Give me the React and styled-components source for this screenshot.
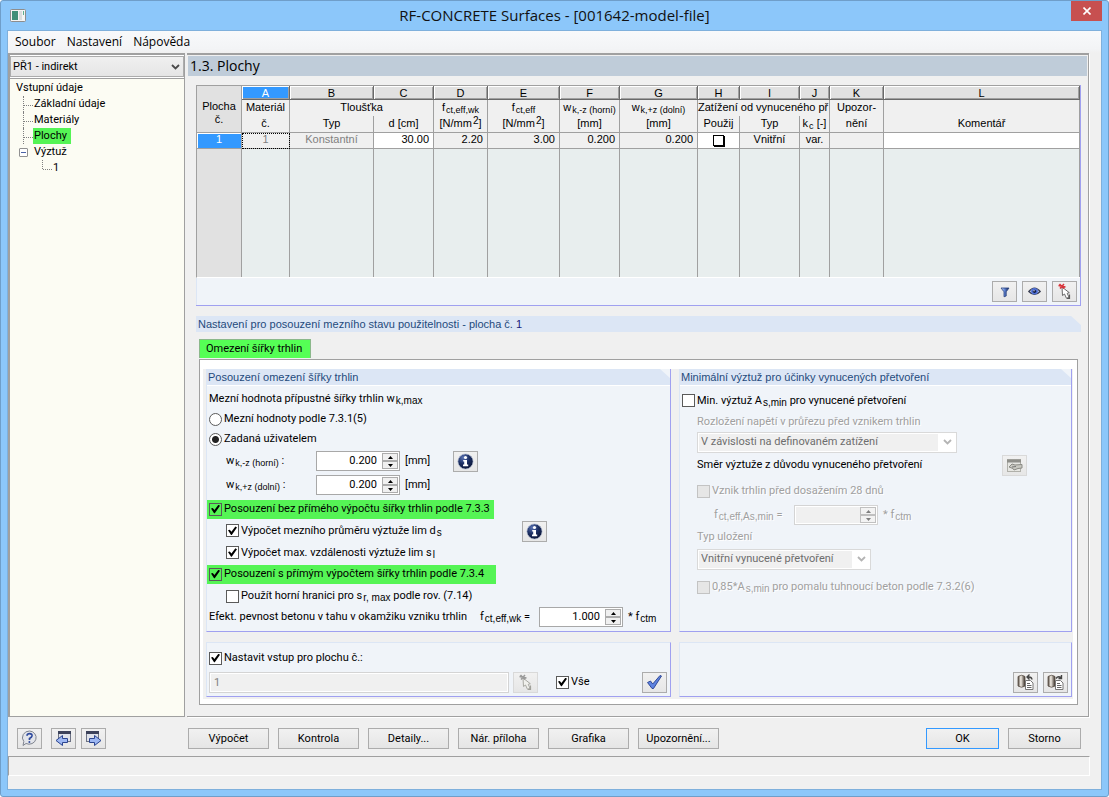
import React from "react";
import styled, { createGlobalStyle, css } from "styled-components";

const ui = `Roboto, "Noto Sans", sans-serif`;
const segoe = `"Open Sans", "Noto Sans", sans-serif`;
const gridFont = `"Liberation Sans", Arial, sans-serif`;

const GlobalStyle = createGlobalStyle`
  * { box-sizing: border-box; }
  body { margin: 0; font: 11px/16px ${ui}; color: #000; }
  button, input, select { font: inherit; color: inherit; margin: 0; }
  sub, sup { line-height: 0; }
  sub { font: 10px/0 ${gridFont}; vertical-align: -2px; margin-left: 1px; }
  sup { font-size: 10px; vertical-align: 3px; margin-left: 1px; }
`;

const Window = styled.div`
  min-height: 100vh;
  display: flex;
  flex-direction: column;
  background: #8cc7fa;
  border: 1px solid #6f9ec9;
  border-radius: 3px;
  padding: 0 6px 6px;
`;

const TitleBar = styled.header`
  display: grid;
  grid-template-columns: 34px 1fr 34px;
  height: 29px;
`;

const AppIcon = styled.svg`
  margin: 8px 0 0 3px;
`;

const WindowTitle = styled.h1`
  margin: 0;
  font: 15px/29px ${segoe};
  text-align: center;
  white-space: nowrap;
  color: #111;
`;

const CloseButton = styled.button`
  width: 31px;
  height: 20px;
  justify-self: end;
  display: flex;
  align-items: center;
  justify-content: center;
  border: 0;
  padding: 0;
  background: #c75050;
`;

const Client = styled.div`
  flex: 1;
  display: flex;
  flex-direction: column;
  background: #f0f0f0;
  border: 1px solid #7fb0dc;
`;

const MenuBar = styled.nav`
  height: 22px;
  display: flex;
  gap: 11px;
  padding: 0 7px;
  background: linear-gradient(#f8f9fb, #f3f4f6 80%, #f0f0f0);
`;

const MenuItem = styled.button`
  border: 0;
  padding: 0;
  background: none;
  font: 12px/20px ${segoe};
`;

const Workspace = styled.div`
  flex: 1;
  display: grid;
  grid-template-columns: 177px minmax(0, 1fr);
  gap: 2px;
  padding-right: 12px;
`;

const Sidebar = styled.aside`
  display: flex;
  flex-direction: column;
  background: #fff;
  border: solid #a0a0a0;
  border-width: 2px 1px 1px 2px;
  padding-top: 1px;
`;

const SelectBox = styled.div`
  display: grid;
  width: ${(p) => p.$width || "auto"};
  height: 21px;
  border: 1px solid ${(p) => (p.$muted ? "#d9d9d9" : "#acacac")};
  background: ${(p) => (p.$muted ? "#fff" : "linear-gradient(#f0f0f0, #e5e5e5)")};
  > * { grid-area: 1 / 1; }
  svg { place-self: center end; margin-right: ${(p) => (p.$muted ? 4 : 3)}px; pointer-events: none; }
  select {
    appearance: none;
    border: 0;
    border-radius: 0;
    outline: none;
    min-width: 0;
    opacity: 1;
    padding: 0 2px;
    background: transparent;
  }
  select:disabled {
    margin: 1px 18px 1px 1px;
    padding: 0 2px;
    background: #f0f0f0;
    color: #6d6d6d;
  }
`;

const Tree = styled.ul`
  flex: 1;
  margin: 1px 0 0;
  border-top: 1px solid #a0a0a0;
  padding: 1px 0 0 5px;
  list-style: none;
  background: #fcfcf3;
`;

const TreeItem = styled.li`
  display: flex;
  height: 16px;
  line-height: 16px;
  padding-left: ${(p) => p.$level * 19}px;
`;

const Branch = styled.span`
  width: 10px;
  margin-left: 8px;
  height: ${(p) => (p.$last ? 9 : 16)}px;
  border-left: 1px dotted #808080;
  display: flex;
  &::after {
    content: "";
    width: 9px;
    height: 9px;
    border-bottom: 1px dotted #808080;
  }
`;

const Expander = styled.button`
  width: 9px;
  height: 9px;
  margin: 4px 5px 0 4px;
  border: 1px solid #919191;
  border-radius: 1px;
  padding: 3px 1px;
  background: #fff;
  display: flex;
  &::after { content: ""; flex: 1; height: 1px; background: #4b63a7; }
`;

const TreeLabel = styled.a`
  color: inherit;
  text-decoration: none;
  padding: 0 4px 0 1px;
  white-space: nowrap;
  background: ${(p) => (p.$active ? "#55f455" : "none")};
`;

const Main = styled.main`
  border: solid #a0a0a0;
  border-width: 2px 1px 1px 0;
  box-shadow: 1px 1px 0 #fff;
  padding: 1px 1px 11px 1px;
  background: #f0f0f0;
`;

const PageTitle = styled.h2`
  margin: 0;
  height: 20px;
  padding-left: 2px;
  background: #bfccd9;
  font: 14px/20px ${segoe};
`;

const Page = styled.div`
  padding: 9px 6px 0 8px;
`;

const GridPanel = styled.section`
  background: #f0f4f9;
  border: solid #a0a0f0;
  border-width: 0 1px 1px 0;
`;

const DataTable = styled.table`
  width: 100%;
  table-layout: fixed;
  border-collapse: separate;
  border-spacing: 0;
  border-top: 1px solid #a0a0a0;
  border-left: 1px solid #a0a0a0;
  border-bottom: 1px solid #fff;
  font: 11px/13px ${gridFont};
  th, td {
    padding: 0 0 2px;
    font-weight: normal;
    overflow: hidden;
    white-space: nowrap;
    text-align: center;
    border: 0 solid #a0a0a0;
    border-right-width: 1px;
  }
  sub { font-size: 9px; }
`;

const ColumnLetter = styled.th`
  height: 14px;
  line-height: 12px;
  background: ${(p) => (p.$selected ? "#3399ff" : "#e1e1e1")};
  color: ${(p) => (p.$selected ? "#fff" : "#000")};
  box-shadow: inset 1px 1px 0 #fff, inset -1px -1px 0 #a0a0a0;
  && { border-right-color: #696969; border-bottom: 1px solid #696969; padding: 0; }
`;

const HeadCell = styled.th`
  height: ${(p) => (p.$bottom ? 17 : 16)}px;
  background: #f0f0f0;
  && {
    border-bottom-width: ${(p) => (p.$bottom ? 1 : 0)}px;
    text-align: ${(p) => (p.$clip ? "left" : "center")};
  }
`;

const RowHead = styled.th`
  background: #e1e1e1;
  && { border-bottom-width: 1px; padding-top: 10px; }
`;

const RowNumber = styled.th`
  height: 16px;
  background: #3399ff;
  color: #fff;
  box-shadow: inset 1px 1px 0 #fff;
  && { border-bottom-width: 1px; }
`;

const Cell = styled.td`
  height: 16px;
  background: ${(p) => (p.$editable ? "#fff" : "#f0f0f0")};
  color: ${(p) => (p.$muted ? "#808080" : "#000")};
  ${(p) => p.$focused && css`outline: 1px dotted #000; outline-offset: -1px;`}
  && {
    border-bottom-width: 1px;
    text-align: ${(p) => (p.$number ? "right" : "center")};
    padding-right: ${(p) => (p.$number ? 4 : 0)}px;
  }
`;

const CellCheck = styled.input`
  appearance: none;
  display: block;
  width: 11px;
  height: 11px;
  && { margin: 2px auto 0; }
  border: 1px solid #000;
  background: #fff;
  box-shadow: 1px 1px 0 #000;
`;

const Filler = styled.td`
  height: 128px;
  background: ${(p) => (p.$head ? "#e1e1e1" : "#e8eeee")};
`;

const GridTools = styled.div`
  display: flex;
  justify-content: flex-end;
  gap: 5px;
  padding: 3px 3px 3px 0;
  border-left: 1px solid #dce6f5;
`;

const IconButton = styled.button`
  width: 25px;
  height: 21px;
  flex: none;
  display: inline-flex;
  align-items: center;
  justify-content: center;
  padding: 0;
  border: 1px solid ${(p) => (p.disabled ? "#d9d9d9" : "#acacac")};
  background: linear-gradient(#f1f1f1, #e6e6e6);
  svg { display: block; }
`;

const caption = css`
  margin: 0;
  height: 16px;
  background: #dce6f5;
  color: #1f4a7c;
  font: 11px/16px ${gridFont};
  clip-path: polygon(0 0, calc(100% - 10px) 0, 100% 9px, 100% 100%, 0 100%);
`;

const SectionTitle = styled.h3`
  ${caption}
  margin-top: 10px;
  padding-left: 2px;
  span { color: #1a1a7a; }
`;

const Tab = styled.button`
  display: block;
  height: 19px;
  margin: 7px 0 0 3px;
  border: 1px solid #8bb88b;
  border-bottom: 0;
  padding: 0 8px 0 6px;
  background: #55ff55;
`;

const TabPanel = styled.section`
  margin: 1px 3px 0 3px;
  border: 1px solid #a0a0a0;
  background: #fff;
  padding: 9px 4px 5px 3px;
`;

const Panels = styled.div`
  display: grid;
  grid-template-columns: 465px minmax(0, 1fr);
  column-gap: 8px;
  row-gap: 10px;
  padding: 0 1px 2px 3px;
  background: #f0f0f0;
`;

const Group = styled.section`
  display: flex;
  flex-direction: column;
  border: 1px solid #a0a0f0;
  border-top: ${(p) => (p.$titled ? "0" : "1px solid #dce6f5")};
  border-left-color: #dce6f5;
  background: #f0f4f9;
`;

const GroupTitle = styled.h4`
  ${caption}
  flex: none;
  padding-left: 1px;
`;

const Form = styled.div`
  display: grid;
  grid-template-rows: ${(p) => p.$rows};
  align-items: center;
  border-top: 1px solid #fff;
  padding: 3px 0 4px 2px;
`;

const Line = styled.div`
  display: flex;
  align-items: center;
  white-space: nowrap;
  padding-left: ${(p) => p.$indent || 0}px;
  color: ${(p) => (p.$muted ? "#a0a0a0" : "inherit")};
  ${(p) => p.$muted && "text-shadow: 1px 1px 0 #fff;"}
`;

const Marked = styled(Line)`
  width: ${(p) => p.$width}px;
  height: 19px;
  margin-left: -2px;
  padding-left: 2px;
  background: #55f455;
`;

const Choice = styled.label`
  display: inline-flex;
  align-items: center;
  gap: 2px;
  white-space: nowrap;
`;

const Radio = styled.input`
  appearance: none;
  width: 13px;
  height: 13px;
  border: 1px solid #5a5a5a;
  border-radius: 50%;
  background: #fff;
  &:checked { background: radial-gradient(circle, #222 0 3px, #fff 4px); }
`;

const Check = styled.input`
  appearance: none;
  width: 13px;
  height: 13px;
  border: 1px solid ${(p) => (p.disabled ? "#c3c3c3" : "#5a5a5a")};
  background: ${(p) => (p.disabled ? "#e6e6e6" : p.$tint || "#fff")};
  display: inline-grid;
  &:checked::after {
    content: "";
    width: 9px;
    height: 9px;
    margin: 1px;
    background: #000;
    clip-path: polygon(0 45%, 20% 38%, 38% 62%, 82% 4%, 100% 14%, 42% 98%, 34% 98%);
  }
`;

const FieldLabel = styled.label`
  width: ${(p) => p.$width}px;
  flex: none;
`;

const SmallSub = styled.sub`
  && { font-size: 9px; }
`;

const Unit = styled.span`
  padding-left: 5px;
  width: ${(p) => p.$width || "auto"};
`;

const SpinBox = styled.span`
  width: 84px;
  height: 20px;
  flex: none;
  display: flex;
  border: 1px solid ${(p) => (p.$muted ? "#d4d4d4" : "#a8a8a8")};
  background: #fff;
  padding: 1px;
  input {
    flex: 1;
    min-width: 0;
    border: 0;
    outline: 0;
    padding: 0 5px 0 0;
    background: ${(p) => (p.$muted ? "#f0f0f0" : "#fff")};
    text-align: right;
  }
`;

const SpinButtons = styled.span`
  width: 16px;
  display: grid;
  grid-template-rows: 1fr 1fr;
  button {
    border: 1px solid #acacac;
    padding: 0;
    background: #f0f0f0;
    display: flex;
    align-items: center;
    justify-content: center;
  }
  opacity: ${(p) => (p.$muted ? 0.75 : 1)};
`;

const ApplyForm = styled.div`
  display: grid;
  grid-template-rows: 18px 24px;
  row-gap: 3px;
  align-items: center;
  padding: 6px 3px 2px 2px;
`;

const NumberField = styled.input`
  flex: 1;
  min-width: 0;
  height: 21px;
  border: 1px solid #d4d4d4;
  padding: 0 4px;
  background: #f0f0f0;
  box-shadow: inset 0 0 0 1px #fff;
  &:disabled { color: #808080; }
`;

const ApplyRight = styled.div`
  flex: 0 0 158px;
  display: flex;
  align-items: center;
  padding-left: 4px;
  label { margin-left: 18px; }
  > button:last-child { margin-left: auto; }
`;

const Corner = styled.div`
  flex: 1;
  display: flex;
  align-items: flex-end;
  justify-content: flex-end;
  gap: 5px;
  padding: 3px;
`;

const Footer = styled.footer`
  display: flex;
  align-items: center;
  padding: 11px 20px 7px 9px;
`;

const ToolSet = styled.div`
  width: 171px;
  flex: none;
  display: flex;
  gap: 5px;
  button:first-child { margin-right: 4px; }
`;

const Actions = styled.div`
  flex: 1;
  display: flex;
  gap: 9px;
`;

const DialogActions = styled.div`
  display: flex;
  gap: 9px;
`;

const PushButton = styled.button`
  width: ${(p) => (p.$narrow ? 73 : 81)}px;
  height: 21px;
  padding: 0;
  border: 1px solid ${(p) => (p.$primary ? "#3399ff" : "#acacac")};
  background: linear-gradient(#f1f1f1, #e5e5e5);
  line-height: 18px;
  white-space: nowrap;
`;

const StatusBar = styled.div`
  height: 20px;
  margin: 0 11px 13px 0;
  border: 1px solid #fff;
  border-top-color: #a0a0a0;
  border-left-color: #a0a0a0;
`;

function Chevron({ muted }) {
  return (
    <svg width="9" height="6" viewBox="0 0 9 6">
      <path d="M1 1 L4.500 4.500 L8 1" fill="none" stroke={muted ? "#b4b4b4" : "#4a4a4a"} strokeWidth="1.800" />
    </svg>
  );
}

function Spin({ id, value, disabled }) {
  const fill = disabled ? "#555" : "#000";
  return (
    <SpinBox $muted={disabled}>
      <input id={id} defaultValue={value} disabled={disabled} />
      <SpinButtons $muted={disabled}>
        <button aria-label="+" disabled={disabled}>
          <svg width="5" height="3" viewBox="0 0 5 3"><path d="M0 3 L2.500 0 L5 3Z" fill={fill} /></svg>
        </button>
        <button aria-label="-" disabled={disabled}>
          <svg width="5" height="3" viewBox="0 0 5 3"><path d="M0 0 L2.500 3 L5 0Z" fill={fill} /></svg>
        </button>
      </SpinButtons>
    </SpinBox>
  );
}

function InfoIcon() {
  return (
    <svg width="17" height="17" viewBox="0 0 17 17">
      <defs>
        <radialGradient id="ball" cx="0.350" cy="0.250" r="0.800">
          <stop offset="0" stopColor="#5a73b5" />
          <stop offset="0.500" stopColor="#1c2f63" />
          <stop offset="1" stopColor="#0b1536" />
        </radialGradient>
      </defs>
      <circle cx="8.500" cy="8.500" r="7.600" fill="url(#ball)" stroke="#b9c2d6" strokeWidth="0.700" />
      <circle cx="8.500" cy="4.500" r="1.600" fill="#fff" />
      <path d="M6.200 7 H10 V11.600 H11.200 V13.200 H6 V11.600 H7.200 V8.500 H6.200Z" fill="#fff" />
    </svg>
  );
}

function FilterIcon() {
  return (
    <svg width="12" height="12" viewBox="0 0 12 12">
      <defs>
        <linearGradient id="funnel"><stop offset="0" stopColor="#e3ecff" /><stop offset="0.400" stopColor="#6a8fe0" /><stop offset="1" stopColor="#0b1b4d" /></linearGradient>
      </defs>
      <path d="M2 2 H10 L7.200 5.800 V10 L5 10.800 V5.800Z" fill="url(#funnel)" stroke="#2a437f" strokeWidth="0.800" />
    </svg>
  );
}

function EyeIcon() {
  return (
    <svg width="13" height="11" viewBox="0 0 13 11">
      <path d="M0.800 5.500 Q6.500 -1.500 12.200 5.500 Q6.500 11.500 0.800 5.500Z" fill="#b9c6ee" stroke="#3a3f52" strokeWidth="1.200" />
      <circle cx="6.500" cy="5.300" r="3.300" fill="#4f6fd4" />
      <circle cx="6.500" cy="5.300" r="1.600" fill="#101a40" />
      <circle cx="6" cy="4.700" r="0.700" fill="#dfe7ff" />
    </svg>
  );
}

function PickIcon({ muted }) {
  const red = muted ? "#9a9a9a" : "#d8343a";
  const ink = muted ? "#a0a09a" : "#5a5a5a";
  return (
    <svg width="15" height="17" viewBox="0 0 15 17">
      <path d="M5 4 L5.500 12.500 L7.500 11 L9.500 15.300 L12 14.200 L10.200 10.300 L12.300 9.700Z" fill={muted ? "#f0f0ec" : "#fff"} stroke={ink} strokeWidth="0.900" />
      <path d="M12.500 11.500 V15.500 H10" stroke={ink} strokeWidth="1.200" fill="none" />
      <path d="M1.500 2.500 L8.500 4 M3 5.500 L7 1 M2.500 1 L7 5.500" stroke={red} strokeWidth="1.500" fill="none" />
    </svg>
  );
}

function TickIcon() {
  return (
    <svg width="17" height="16" viewBox="0 0 17 16">
      <path d="M1.500 8.500 L4.500 7 L6.700 10 L14 1.500 L15.500 2 L7.500 14.500 L6 14.500Z" fill="#5f83e0" stroke="#27408f" strokeWidth="0.900" />
    </svg>
  );
}

function TableHandIcon() {
  return (
    <svg width="17" height="15" viewBox="0 0 17 15">
      <rect x="1.500" y="1.500" width="13" height="12" fill="#e6e6e2" stroke="#b0b0aa" />
      <path d="M1 1.500 H15 V4.500 H1Z" fill="#8f8f8a" />
      <path d="M3 9 L6 6 L9 7 L16 6.500 V10 L12 10.500 L8 12 L7 10.500Z" fill="#c9c9c2" stroke="#8a8a84" />
      <path d="M6 9 L10 8.500" stroke="#777" />
    </svg>
  );
}

function CopyIcon({ forward }) {
  return (
    <svg width="18" height="17" viewBox="0 0 18 17">
      <defs>
        <linearGradient id="drum"><stop offset="0" stopColor="#4a4038" /><stop offset="0.400" stopColor="#f5f0e8" /><stop offset="1" stopColor="#3b322b" /></linearGradient>
      </defs>
      <path d="M1 2.500 Q4.500 0 8 2.500 V12 Q4.500 14.500 1 12Z" fill="url(#drum)" stroke="#5a5048" strokeWidth="0.800" />
      <path d="M8.500 6.500 H13.500 L16 9 V15.500 H8.500Z" fill="#fff" stroke="#777" />
      <path d="M10 9.500 H13 M10 11.500 H14.500 M10 13.500 H14.500" stroke="#666" />
      <path d={forward ? "M9 4.500 Q11 1.500 14 3.500 M14.500 1 V4.500 H11.500" : "M15 5.500 Q14.500 2.500 11 3 M12.500 0.500 L10 3 L12.500 5.500"} fill="none" stroke="#444" strokeWidth="1.400" />
    </svg>
  );
}

function HelpIcon() {
  return (
    <svg width="17" height="17" viewBox="0 0 17 17">
      <path d="M8.500 1 A7 6.600 0 1 1 5 13.500 L2 15.500 L2.800 11.500 A7 6.600 0 0 1 8.500 1Z" fill="#e3e5ea" stroke="#7f848f" />
      <path d="M6 5.800 Q6 3.700 8.600 3.700 Q11.200 3.700 11 5.900 Q10.800 7.200 8.500 8.500 V10" fill="none" stroke="#2f4a9e" strokeWidth="1.700" />
      <circle cx="8.400" cy="12" r="1" fill="#2f4a9e" />
    </svg>
  );
}

function PageIcon({ forward }) {
  return (
    <svg width="17" height="17" viewBox="0 0 17 17">
      <rect x={forward ? 1.5 : 3.5} y="1.500" width="12" height="10" fill="#dfe2ea" stroke="#6d7284" />
      <path d={forward ? "M1 1 H14 V4 H1Z" : "M3 1 H16 V4 H3Z"} fill="#3c425a" />
      <path
        d={forward ? "M4.500 8.500 H9.500 V5.500 L16 10.500 L9.500 15.500 V12.500 H4.500Z" : "M12.500 8.500 H7.500 V5.500 L1 10.500 L7.500 15.500 V12.500 H12.500Z"}
        fill="#9db7f2"
        stroke="#2b4590"
      />
    </svg>
  );
}

const columns = [45, 48, 84, 60, 54, 72, 60, 78, 42, 60, 30, 54];
const letters = ["A", "B", "C", "D", "E", "F", "G", "H", "I", "J", "K", "L"];

function SurfacesTable() {
  return (
    <DataTable>
      <colgroup>
        {columns.map((w, i) => <col key={i} width={w} />)}
        <col />
      </colgroup>
      <thead>
        <tr>
          <RowHead rowSpan={3}>Plocha<br />č.</RowHead>
          {letters.map((l) => <ColumnLetter key={l} $selected={l === "A"}>{l}</ColumnLetter>)}
        </tr>
        <tr>
          <HeadCell>Materiál</HeadCell>
          <HeadCell colSpan={2}>Tloušťka</HeadCell>
          <HeadCell>f<sub>ct,eff,wk</sub></HeadCell>
          <HeadCell>f<sub>ct,eff</sub></HeadCell>
          <HeadCell>w<sub>k,-z (horní)</sub></HeadCell>
          <HeadCell>w<sub>k,+z (dolní)</sub></HeadCell>
          <HeadCell colSpan={3} $clip>Zatížení od vynuceného př</HeadCell>
          <HeadCell>Upozor-</HeadCell>
          <HeadCell />
        </tr>
        <tr>
          <HeadCell $bottom>č.</HeadCell>
          <HeadCell $bottom>Typ</HeadCell>
          <HeadCell $bottom>d [cm]</HeadCell>
          <HeadCell $bottom>[N/mm<sup>2</sup>]</HeadCell>
          <HeadCell $bottom>[N/mm<sup>2</sup>]</HeadCell>
          <HeadCell $bottom>[mm]</HeadCell>
          <HeadCell $bottom>[mm]</HeadCell>
          <HeadCell $bottom>Použij</HeadCell>
          <HeadCell $bottom>Typ</HeadCell>
          <HeadCell $bottom>k<sub>c</sub> [-]</HeadCell>
          <HeadCell $bottom>nění</HeadCell>
          <HeadCell $bottom>Komentář</HeadCell>
        </tr>
      </thead>
      <tbody>
        <tr>
          <RowNumber>1</RowNumber>
          <Cell $muted $focused>1</Cell>
          <Cell $muted>Konstantní</Cell>
          <Cell $number $editable>30.00</Cell>
          <Cell $number>2.20</Cell>
          <Cell $number>3.00</Cell>
          <Cell $number>0.200</Cell>
          <Cell $number>0.200</Cell>
          <Cell $editable><CellCheck type="checkbox" aria-label="Použij" /></Cell>
          <Cell>Vnitřní</Cell>
          <Cell>var.</Cell>
          <Cell />
          <Cell $editable />
        </tr>
        <tr>
          <Filler $head />
          {letters.map((l) => <Filler key={l} />)}
        </tr>
      </tbody>
    </DataTable>
  );
}

function CrackWidthGroup() {
  return (
    <Group $titled>
      <GroupTitle>Posouzení omezení šířky trhlin</GroupTitle>
      <Form $rows="20px 20px 20px 24px 24px 24px 21px 21px 22px 22px 20px">
        <Line><span>Mezní hodnota přípustné šířky trhlin w<sub>k,max</sub></span></Line>
        <Line><Choice><Radio type="radio" name="limit" />Mezní hodnoty podle 7.3.1(5)</Choice></Line>
        <Line><Choice><Radio type="radio" name="limit" defaultChecked />Zadaná uživatelem</Choice></Line>
        <Line $indent={17}>
          <FieldLabel $width={90} htmlFor="wtop">w<SmallSub>k,-z (horní)</SmallSub> :</FieldLabel>
          <Spin id="wtop" value="0.200" />
          <Unit $width="53px">[mm]</Unit>
          <IconButton aria-label="Info"><InfoIcon /></IconButton>
        </Line>
        <Line $indent={17}>
          <FieldLabel $width={90} htmlFor="wbottom">w<SmallSub>k,+z (dolní)</SmallSub> :</FieldLabel>
          <Spin id="wbottom" value="0.200" />
          <Unit>[mm]</Unit>
        </Line>
        <Marked $width={287}>
          <Choice><Check type="checkbox" defaultChecked $tint="#55f455" />Posouzení bez přímého výpočtu šířky trhlin podle 7.3.3</Choice>
        </Marked>
        <Line $indent={17}>
          <FieldLabel as="div" $width={296}>
            <Choice><Check type="checkbox" defaultChecked /><span>Výpočet mezního průměru výztuže lim d<sub>s</sub></span></Choice>
          </FieldLabel>
          <IconButton aria-label="Info"><InfoIcon /></IconButton>
        </Line>
        <Line $indent={17}>
          <Choice><Check type="checkbox" defaultChecked /><span>Výpočet max. vzdálenosti výztuže lim s<sub>l</sub></span></Choice>
        </Line>
        <Marked $width={289}>
          <Choice><Check type="checkbox" defaultChecked $tint="#55f455" />Posouzení s přímým výpočtem šířky trhlin podle 7.3.4</Choice>
        </Marked>
        <Line $indent={17}>
          <Choice><Check type="checkbox" /><span>Použít horní hranici pro s<sub>r, max</sub> podle rov. (7.14)</span></Choice>
        </Line>
        <Line>
          <FieldLabel $width={271} htmlFor="strength">Efekt. pevnost betonu v tahu v okamžiku vzniku trhlin</FieldLabel>
          <FieldLabel as="span" $width={59}>f<sub>ct,eff,wk</sub> =</FieldLabel>
          <Spin id="strength" value="1.000" />
          <Unit>* f<sub>ctm</sub></Unit>
        </Line>
      </Form>
    </Group>
  );
}

function MinReinforcementGroup() {
  return (
    <Group $titled>
      <GroupTitle>Minimální výztuž pro účinky vynucených přetvoření</GroupTitle>
      <Form $rows="23px 20px 20px 26px 26px 22px 22px 22px 34px">
        <Line><Choice><Check type="checkbox" /><span>Min. výztuž A<sub>s,min</sub> pro vynucené přetvoření</span></Choice></Line>
        <Line as="label" htmlFor="stress" $indent={15} $muted>Rozložení napětí v průřezu před vznikem trhlin</Line>
        <Line $indent={15}>
          <SelectBox $muted $width="260px">
            <select id="stress" disabled><option>V závislosti na definovaném zatížení</option></select>
            <Chevron muted />
          </SelectBox>
        </Line>
        <Line $indent={15}>
          <FieldLabel as="span" $width={305}>Směr výztuže z důvodu vynuceného přetvoření</FieldLabel>
          <IconButton disabled aria-label="Směr výztuže"><TableHandIcon /></IconButton>
        </Line>
        <Line $indent={15} $muted><Choice><Check type="checkbox" disabled />Vznik trhlin před dosažením 28 dnů</Choice></Line>
        <Line $indent={32} $muted>
          <FieldLabel $width={80} htmlFor="fct">f<sub>ct,eff,As,min</sub> =</FieldLabel>
          <Spin id="fct" value="" disabled />
          <Unit>* f<sub>ctm</sub></Unit>
        </Line>
        <Line as="label" htmlFor="support" $indent={15} $muted>Typ uložení</Line>
        <Line $indent={15}>
          <SelectBox $muted $width="174px">
            <select id="support" disabled><option>Vnitřní vynucené přetvoření</option></select>
            <Chevron muted />
          </SelectBox>
        </Line>
        <Line $indent={15} $muted>
          <Choice><Check type="checkbox" disabled /><span>0,85*A<sub>s,min</sub> pro pomalu tuhnoucí beton podle 7.3.2(6)</span></Choice>
        </Line>
      </Form>
    </Group>
  );
}

export default function App() {
  return (
    <>
      <GlobalStyle />
      <Window>
        <TitleBar>
          <AppIcon width="16" height="13" viewBox="0 0 16 13">
            <rect x="0.500" y="0.500" width="15" height="12" rx="1" fill="#f4f4f4" stroke="#8d8d8d" />
            <rect x="2" y="2" width="6" height="9" fill="#3f8f78" />
            <rect x="9" y="2" width="3" height="9" fill="#dcdcdc" />
            <rect x="13" y="2" width="1" height="4" fill="#5fae8e" />
          </AppIcon>
          <WindowTitle>RF-CONCRETE Surfaces - [001642-model-file]</WindowTitle>
          <CloseButton aria-label="Zavřít">
            <svg width="8" height="8" viewBox="0 0 8 8"><path d="M0.500 0.500 L7.500 7.500 M7.500 0.500 L0.500 7.500" stroke="#fff" strokeWidth="1.600" /></svg>
          </CloseButton>
        </TitleBar>
        <Client>
          <MenuBar>
            <MenuItem>Soubor</MenuItem>
            <MenuItem>Nastavení</MenuItem>
            <MenuItem>Nápověda</MenuItem>
          </MenuBar>
          <Workspace>
            <Sidebar>
              <SelectBox>
                <select aria-label="Případ"><option>PŘ1 - indirekt</option></select>
                <Chevron />
              </SelectBox>
              <Tree>
                <TreeItem $level={0}><TreeLabel href="#vstup">Vstupní údaje</TreeLabel></TreeItem>
                <TreeItem $level={0}><Branch /><TreeLabel href="#zaklad">Základní údaje</TreeLabel></TreeItem>
                <TreeItem $level={0}><Branch /><TreeLabel href="#materialy">Materiály</TreeLabel></TreeItem>
                <TreeItem $level={0}><Branch /><TreeLabel href="#plochy" $active>Plochy</TreeLabel></TreeItem>
                <TreeItem $level={0}><Expander aria-label="Sbalit" /><TreeLabel href="#vyztuz">Výztuž</TreeLabel></TreeItem>
                <TreeItem $level={1}><Branch $last /><TreeLabel href="#vyztuz1">1</TreeLabel></TreeItem>
              </Tree>
            </Sidebar>
            <Main>
              <PageTitle>1.3. Plochy</PageTitle>
              <Page>
                <GridPanel>
                  <SurfacesTable />
                  <GridTools>
                    <IconButton aria-label="Filtr"><FilterIcon /></IconButton>
                    <IconButton aria-label="Zobrazit"><EyeIcon /></IconButton>
                    <IconButton aria-label="Vybrat"><PickIcon /></IconButton>
                  </GridTools>
                </GridPanel>
                <SectionTitle>Nastavení pro posouzení mezního stavu použitelnosti - plocha č. <span>1</span></SectionTitle>
                <Tab>Omezení šířky trhlin</Tab>
                <TabPanel>
                  <Panels>
                    <CrackWidthGroup />
                    <MinReinforcementGroup />
                    <Group>
                      <ApplyForm>
                        <Line><Choice><Check type="checkbox" defaultChecked />Nastavit vstup pro plochu č.:</Choice></Line>
                        <Line>
                          <NumberField aria-label="Plocha č." defaultValue="1" disabled />
                          <ApplyRight>
                            <IconButton disabled aria-label="Vybrat"><PickIcon muted /></IconButton>
                            <Choice><Check type="checkbox" defaultChecked />Vše</Choice>
                            <IconButton aria-label="Použít"><TickIcon /></IconButton>
                          </ApplyRight>
                        </Line>
                      </ApplyForm>
                    </Group>
                    <Group>
                      <Corner>
                        <IconButton aria-label="Načíst"><CopyIcon /></IconButton>
                        <IconButton aria-label="Uložit"><CopyIcon forward /></IconButton>
                      </Corner>
                    </Group>
                  </Panels>
                </TabPanel>
              </Page>
            </Main>
          </Workspace>
          <Footer>
            <ToolSet>
              <IconButton aria-label="Nápověda"><HelpIcon /></IconButton>
              <IconButton aria-label="Zpět"><PageIcon /></IconButton>
              <IconButton aria-label="Vpřed"><PageIcon forward /></IconButton>
            </ToolSet>
            <Actions>
              <PushButton>Výpočet</PushButton>
              <PushButton>Kontrola</PushButton>
              <PushButton>Detaily...</PushButton>
              <PushButton>Nár. příloha</PushButton>
              <PushButton>Grafika</PushButton>
              <PushButton>Upozornění...</PushButton>
            </Actions>
            <DialogActions>
              <PushButton $narrow $primary>OK</PushButton>
              <PushButton $narrow>Storno</PushButton>
            </DialogActions>
          </Footer>
          <StatusBar />
        </Client>
      </Window>
    </>
  );
}
